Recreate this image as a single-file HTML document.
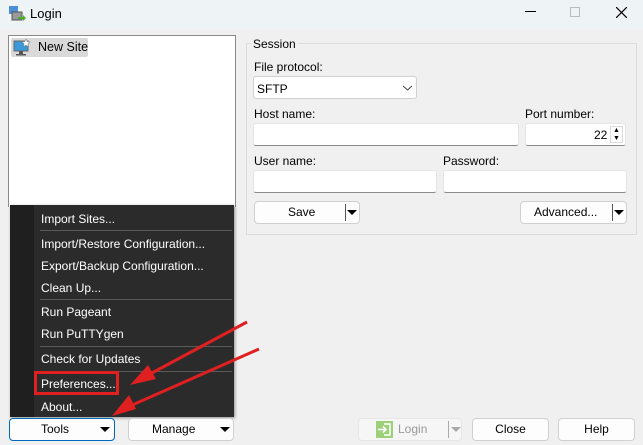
<!DOCTYPE html>
<html><head><style>
*{box-sizing:border-box}
body{margin:0;width:643px;height:445px;background:#f0f0f0;font-family:"Liberation Sans",sans-serif;font-size:12px;color:#000;position:relative;overflow:hidden}
.a{position:absolute}
.inp{position:absolute;background:#fff;border:1px solid #e5e5e5;border-bottom:1px solid #8a8a8a;border-radius:3px}
.btn{position:absolute;background:#fdfdfd;border:1px solid #d0d0d0;border-radius:4px;text-align:center;line-height:21px}
.mi{position:absolute;left:41px;color:#fff;font-size:12px}
.sep{position:absolute;left:40px;width:192px;height:1px;background:#5a5a5a}
.tri{position:absolute;width:0;height:0;border-left:5px solid transparent;border-right:5px solid transparent;border-top:5px solid #000}
</style></head><body>
<div class="a" style="left:0;top:0;width:643px;height:29px;background:#eef3f5"></div>
<svg class="a" style="left:8px;top:5px" width="18" height="18"><rect x="1" y="1" width="9" height="8" fill="#4a8fd8"/><rect x="4" y="7" width="10" height="8" fill="#999" stroke="#555"/><path d="M10 12 l5 0 l0 -2 l3 3 l-3 3 l0 -2 l-5 0z" fill="#4caf28"/></svg>
<div class="a" style="left:30px;top:6px;font-size:13px">Login</div>
<div class="a" style="left:525px;top:11px;width:11px;height:1px;background:#000"></div>
<div class="a" style="left:570px;top:7px;width:10px;height:10px;border:1px solid #bbb"></div>
<svg class="a" style="left:616px;top:7px" width="11" height="11"><path d="M0 0L11 11M11 0L0 11" stroke="#000" stroke-width="1.2"/></svg>

<div class="a" style="left:8px;top:35px;width:228px;height:172px;background:#fff;border:1px solid #8a8a8a;border-bottom:none"></div>
<div class="a" style="left:11px;top:38px;width:77px;height:19px;background:#d9d9d9;border-radius:2px"></div>
<svg class="a" style="left:13px;top:39px" width="18" height="17"><rect x="1" y="2" width="14" height="10" fill="#3a9ad9" stroke="#666"/><rect x="6" y="12" width="4" height="3" fill="#555"/><rect x="3" y="15" width="10" height="1.5" fill="#555"/><path d="M13 0l1.3 2.6 2.7.3-2 1.9.5 2.7-2.5-1.3-2.5 1.3.5-2.7-2-1.9 2.7-.3z" fill="#fff" stroke="#888" stroke-width=".6"/></svg>
<div class="a" style="left:38px;top:40px;font-size:12.5px">New Site</div>

<div class="a" style="left:246px;top:43px;width:391px;height:192px;border:1px solid #dcdcdc"></div>
<div class="a" style="left:251px;top:37px;padding:0 2px;background:#f0f0f0">Session</div>
<div class="a" style="left:254px;top:60px">File protocol:</div>
<div class="inp" style="left:253px;top:76px;width:164px;height:23px;border-color:#d0d0d0"></div>
<div class="a" style="left:257px;top:82px">SFTP</div>
<svg class="a" style="left:403px;top:85px" width="9" height="6"><path d="M0 1l4.5 4 4.5-4" fill="none" stroke="#444"/></svg>
<div class="a" style="left:254px;top:107px">Host name:</div>
<div class="inp" style="left:253px;top:123px;width:266px;height:23px"></div>
<div class="a" style="left:525px;top:107px">Port number:</div>
<div class="inp" style="left:525px;top:123px;width:101px;height:23px"></div>
<div class="a" style="left:594px;top:128px">22</div>
<div class="a" style="left:610px;top:126px;width:13px;height:17px;font-size:7px;line-height:8px;text-align:center;border:1px solid #ddd">▲<br>▼</div>
<div class="a" style="left:254px;top:154px">User name:</div>
<div class="inp" style="left:253px;top:170px;width:184px;height:23px"></div>
<div class="a" style="left:443px;top:154px">Password:</div>
<div class="inp" style="left:443px;top:170px;width:184px;height:23px"></div>
<div class="btn" style="left:254px;top:201px;width:106px;height:23px;text-align:left;padding-left:33px">Save</div>
<div class="a" style="left:345px;top:204px;width:1px;height:17px;background:#555"></div>
<div class="tri" style="left:347px;top:210px"></div>
<div class="btn" style="left:520px;top:201px;width:107px;height:23px;text-align:left;padding-left:13px">Advanced...</div>
<div class="a" style="left:612px;top:204px;width:1px;height:17px;background:#555"></div>
<div class="tri" style="left:614px;top:210px"></div>

<div class="a" style="left:10px;top:205px;width:224px;height:212px;background:#2b2b2b;box-shadow:1px 1px 3px rgba(0,0,0,.4)"></div>
<div class="a" style="left:10px;top:205px;width:24px;height:212px;background:#1f1f1f"></div>
<div class="mi" style="top:212px">Import Sites...</div>
<div class="sep" style="top:230px"></div>
<div class="mi" style="top:237px">Import/Restore Configuration...</div>
<div class="mi" style="top:259px">Export/Backup Configuration...</div>
<div class="mi" style="top:281px">Clean Up...</div>
<div class="sep" style="top:299px"></div>
<div class="mi" style="top:305px">Run Pageant</div>
<div class="mi" style="top:327px">Run PuTTYgen</div>
<div class="sep" style="top:346px"></div>
<div class="mi" style="top:352px">Check for Updates</div>
<div class="sep" style="top:371px"></div>
<div class="mi" style="top:377px">Preferences...</div>
<div class="mi" style="top:400px">About...</div>
<div class="a" style="left:34px;top:371px;width:85px;height:24px;border:3px solid #e02020"></div>

<div class="btn" style="left:9px;top:418px;width:106px;height:23px;border-color:#0067c0;text-align:left;padding-left:31px">Tools</div>
<div class="tri" style="left:100px;top:427px"></div>
<div class="btn" style="left:128px;top:418px;width:106px;height:23px;text-align:left;padding-left:23px">Manage</div>
<div class="tri" style="left:220px;top:427px"></div>
<div class="btn" style="left:358px;top:418px;width:104px;height:23px;background:#f6f6f6;border-color:#e6e6e6;color:#9a9a9a;text-align:left;padding-left:39px">Login</div>
<svg class="a" style="left:376px;top:421px" width="17" height="17"><rect width="17" height="17" fill="#9ed07a"/><path d="M8 3h6v11H8" fill="none" stroke="#fff" stroke-width="1.5"/><path d="M2 8.5h8M7 5.5l3 3-3 3" fill="none" stroke="#fff" stroke-width="1.6"/></svg>
<div class="a" style="left:448px;top:421px;width:1px;height:17px;background:#aaa"></div>
<div class="a" style="left:451px;top:427px;border-left:5px solid transparent;border-right:5px solid transparent;border-top:5px solid #aaa"></div>
<div class="btn" style="left:472px;top:418px;width:77px;height:23px">Close</div>
<div class="btn" style="left:558px;top:418px;width:77px;height:23px">Help</div>

<svg class="a" style="left:0;top:0" width="643" height="445"><g stroke="#e02020" stroke-width="3" fill="#e02020"><line x1="247" y1="322" x2="150" y2="374"/><path d="M130 385l18-20 8 14z" stroke="none"/><line x1="259" y1="349" x2="130" y2="406"/><path d="M112 416l17-21 7 14z" stroke="none"/></g></svg>
</body></html>
